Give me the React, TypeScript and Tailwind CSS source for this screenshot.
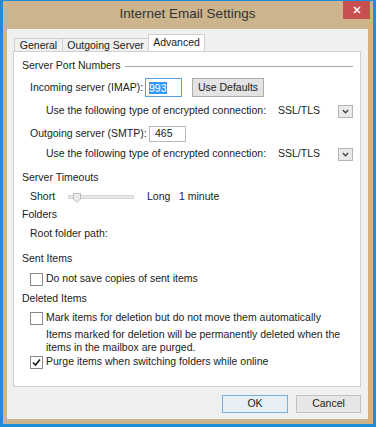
import React from "react";

const FONT = { fontFamily: '"Liberation Sans", Arial, sans-serif' };

function Checkbox({ checked }: { checked?: boolean }) {
  return (
    <span className="flex h-[13px] w-[13px] shrink-0 items-center justify-center border border-[#8a8a8a] bg-white">
      {checked && (
        <svg width="9" height="9" viewBox="0 0 9 9">
          <path d="M1 4.5 L3.5 7 L8 1.5" fill="none" stroke="#1a1a1a" strokeWidth="1.6" />
        </svg>
      )}
    </span>
  );
}

function Dropdown() {
  return (
    <span className="flex h-[13px] w-[15px] shrink-0 items-center justify-center border border-[#b5b5b5] bg-[#eaeaea]">
      <svg width="7" height="5" viewBox="0 0 7 5">
        <path d="M0.8 1 L3.5 3.8 L6.2 1" fill="none" stroke="#444" strokeWidth="1.3" />
      </svg>
    </span>
  );
}

function Tab({ label, width, active }: { label: string; width: string; active?: boolean }) {
  return active ? (
    <div className={`-mb-px flex h-[18px] items-center justify-center border border-b-0 border-[#d0d0d0] bg-white pb-[2px] ${width}`}>
      {label}
    </div>
  ) : (
    <div className={`flex h-[13px] items-center justify-center border border-b-0 border-r-0 border-[#d0d0d0] bg-[#f0f0f0] pt-[2px] ${width}`}>
      {label}
    </div>
  );
}

export default function App() {
  return (
    <div
      className="h-[427px] w-[376px] overflow-hidden whitespace-nowrap border-b-[3px] border-l-[3px] border-r-[3px] border-t border-[#1f8ddb] text-[10.5px] text-[#1b1b1b]"
      style={FONT}
    >
      <div className="flex h-full flex-col bg-[#ccb48d] pb-[5px] pl-[4px] pr-[5px]">
        {/* title bar */}
        <div className="relative flex h-[28px] items-center justify-center">
          <span className="pb-[2px] text-[13.5px] text-[#333]">Internet Email Settings</span>
          <div className="absolute right-[-2px] top-[-1px] flex h-[19px] w-[27px] items-center justify-center bg-[#c75050]">
            <svg width="8" height="8" viewBox="0 0 8 8">
              <path d="M1 1 L7 7 M7 1 L1 7" stroke="white" strokeWidth="1.6" />
            </svg>
          </div>
        </div>

        {/* client area */}
        <div className="flex flex-1 flex-col bg-[#f0f0f0] px-[6px] pt-[5px]">
          <div className="flex items-end pl-[1px]">
            <Tab label="General" width="w-[48px]" />
            <Tab label="Outgoing Server" width="w-[86px]" />
            <Tab label="Advanced" width="w-[57px]" active />
          </div>
          <div className="mr-[1px] flex h-[336px] flex-col border border-[#d0d0d0] bg-white pl-[8px] pr-[7px] pt-[6px]">
            <div className="flex h-[16px] items-center gap-[4px]">
              <span>Server Port Numbers</span>
              <span className="h-px flex-1 bg-[#a9a9a9]" />
            </div>

            <div className="mt-[4px] flex h-[19px] items-center pl-[8px]">
              <span className="w-[115px] shrink-0">Incoming server (IMAP):</span>
              <span className="flex h-[19px] w-[37px] shrink-0 items-center border border-[#5a9fe2] bg-white pl-[3px]">
                <span className="bg-[#3399ff] leading-[12px] text-white">993</span>
              </span>
              <span className="ml-[10px] flex h-[19px] w-[72px] shrink-0 items-center justify-center border border-[#adadad] bg-[#e3e3e3]">
                Use Defaults
              </span>
            </div>

            <div className="mt-[6px] flex h-[16px] items-center pl-[24px]">
              <span className="w-[232px] shrink-0">Use the following type of encrypted connection:</span>
              <span className="w-[60px] shrink-0">SSL/TLS</span>
              <Dropdown />
            </div>

            <div className="mt-[7px] flex h-[16px] items-center pl-[8px]">
              <span className="w-[119px] shrink-0">Outgoing server (SMTP):</span>
              <span className="flex h-[16px] w-[37px] shrink-0 items-center border border-[#b9b9b9] bg-white pl-[5px]">465</span>
            </div>

            <div className="mt-[4px] flex h-[16px] items-center pl-[24px]">
              <span className="w-[232px] shrink-0">Use the following type of encrypted connection:</span>
              <span className="w-[60px] shrink-0">SSL/TLS</span>
              <Dropdown />
            </div>

            <div className="mt-[8px] flex h-[16px] items-center">Server Timeouts</div>

            <div className="mt-[3px] flex h-[16px] items-center pl-[8px]">
              <span className="w-[38px] shrink-0">Short</span>
              <span className="relative h-[4px] w-[66px] shrink-0 border border-[#d6d6d6] bg-[#e7e7e7]">
                <svg className="absolute left-[4px] top-[-3px]" width="8" height="10" viewBox="0 0 8 10">
                  <path d="M0.5 0.5 H7.5 V6 L4 9.5 L0.5 6 Z" fill="#ececec" stroke="#bcbcbc" />
                </svg>
              </span>
              <span className="ml-[13px] w-[32px] shrink-0">Long</span>
              <span>1 minute</span>
            </div>

            <div className="mt-[2px] flex h-[16px] items-center">Folders</div>
            <div className="mt-[3px] flex h-[16px] items-center pl-[8px]">Root folder path:</div>

            <div className="mt-[9px] flex h-[16px] items-center">Sent Items</div>
            <div className="mt-[4px] flex h-[16px] items-center gap-[3px] pl-[8px]">
              <Checkbox />
              <span>Do not save copies of sent items</span>
            </div>

            <div className="mt-[4px] flex h-[16px] items-center">Deleted Items</div>
            <div className="mt-[3px] flex h-[16px] items-center gap-[3px] pl-[8px]">
              <Checkbox />
              <span>Mark items for deletion but do not move them automatically</span>
            </div>
            <div className="mt-[2px] pl-[24px] leading-[13px]">
              Items marked for deletion will be permanently deleted when the
              <br />
              items in the mailbox are purged.
            </div>
            <div className="flex h-[16px] items-center gap-[3px] pl-[8px]">
              <Checkbox checked />
              <span>Purge items when switching folders while online</span>
            </div>
          </div>

          <div className="mt-[8px] flex justify-end gap-[8px] pr-[1px]">
            <span className="flex h-[18px] w-[66px] items-center justify-center border border-[#78b0e6] bg-[#e8eef5]">
              OK
            </span>
            <span className="flex h-[18px] w-[65px] items-center justify-center border border-[#c2c2c2] bg-[#e6e6e6]">
              Cancel
            </span>
          </div>
        </div>
      </div>
    </div>
  );
}
